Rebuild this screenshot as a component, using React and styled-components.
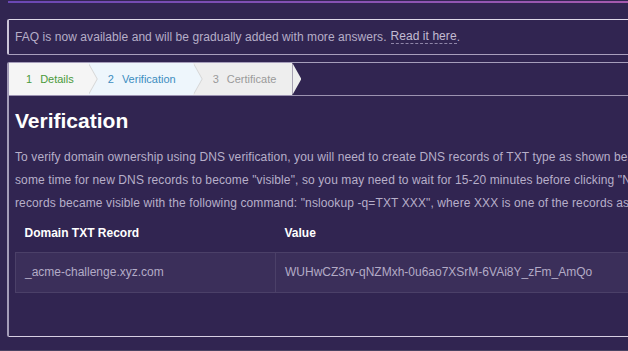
import React from "react";
import styled, { createGlobalStyle } from "styled-components";

const Global = createGlobalStyle`
  html, body { margin: 0; padding: 0; }
  body {
    background: #312551;
    font-family: "Liberation Sans", Arial, sans-serif;
    overflow: hidden;
    width: 628px;
    height: 351px;
  }
`;

const Page = styled.div`
  width: 1200px;
  padding: 1px 0 0 7px;
  height: 350px;
  position: relative;
`;

const TopLine = styled.div`
  height: 2px;
  margin-left: 1px;
  background: linear-gradient(90deg, #6a47b4 0%, #9456b2 40%, #b25cab 60%, #b65ea8 100%);
`;

const Notice = styled.div`
  margin-top: 16px;
  height: 34px;
  display: flex;
  align-items: center;
  padding: 0 6px;
  border: 1px solid #a99fbd;
  border-top-color: #ded8e8;
  border-left: 2px solid #cbc4d8;
  border-radius: 2px;
  font-size: 12px;
  letter-spacing: 0.06px;
  color: #b6aec8;
`;

const NoticeLink = styled.a`
  color: #c3bcd3;
  text-decoration: none;
  border-bottom: 1px dashed #8f85a8;
  margin-left: 4px;
  line-height: 13px;
`;

const Card = styled.div`
  margin-top: 7px;
  border: 1px solid #a69ebb;
  border-left: 2px solid #a49cb8;
  border-bottom-color: #d6cfe2;
  border-right: none;
  border-radius: 2px 0 0 2px;
  padding-bottom: 43px;
`;

const TabBar = styled.div`
  display: flex;
  height: 32px;
  border-bottom: 1px solid #9c93b1;
`;

const Tab = styled.div`
  position: relative;
  z-index: ${(p) => p.$z};
  display: flex;
  align-items: center;
  padding: 0 ${(p) => p.$pr}px 0 ${(p) => p.$pl}px;
  background: ${(p) => p.$bg};
  color: ${(p) => p.$fg};
  font-size: 11px;

  &::before {
    content: "";
    position: absolute;
    top: 0;
    left: calc(100% + 1px);
    width: 9px;
    height: 100%;
    background: ${(p) => (p.$last ? "transparent" : "#d6d6d6")};
    clip-path: polygon(0 0, 100% 50%, 0 100%);
  }
  &::after {
    content: "";
    position: absolute;
    top: 0;
    left: 100%;
    width: 9px;
    height: 100%;
    background: ${(p) => p.$bg};
    clip-path: polygon(0 0, 100% 50%, 0 100%);
  }
`;

const TabNum = styled.span`
  margin-right: 8px;
`;

const Body = styled.div`
  padding: 0 6px;
`;

const Heading = styled.h2`
  margin: 13px 0 13px;
  font-size: 21px;
  line-height: 24px;
  font-weight: bold;
  color: #ffffff;
`;

const Para = styled.p`
  margin: 0;
  font-size: 12px;
  line-height: 23px;
  letter-spacing: 0.11px;
  color: #b7afc9;
  white-space: nowrap;
`;

const Table = styled.table`
  border-collapse: collapse;
  width: 1100px;
  font-size: 12px;
`;

const Th = styled.th`
  text-align: left;
  font-weight: bold;
  color: #ffffff;
  height: 37px;
  padding: 0 9px;
  vertical-align: middle;
  width: ${(p) => (p.$w ? `${p.$w}px` : "auto")};
  box-sizing: border-box;
`;

const Td = styled.td`
  background: #3b2f5a;
  border: 1px solid #4b4068;
  color: #b3abc6;
  height: 39px;
  padding: 0 9px;
  vertical-align: middle;
`;

const BottomStrip = styled.div`
  position: absolute;
  left: 0;
  right: 0;
  bottom: -1px;
  height: 2px;
  background: #4a4262;
`;

export default function App() {
  return (
    <>
      <Global />
      <Page>
        <TopLine />
        <Notice>
          FAQ is now available and will be gradually added with more answers.
          <NoticeLink href="#">Read it here</NoticeLink>.
        </Notice>
        <Card>
          <TabBar>
            <Tab $z={3} $bg="#f5f5f5" $fg="#4a9a3c" $pl={17} $pr={14}>
              <TabNum>1</TabNum>Details
            </Tab>
            <Tab $z={2} $bg="#eef6fc" $fg="#3c8dbf" $pl={20} $pr={17}>
              <TabNum>2</TabNum>Verification
            </Tab>
            <Tab $z={1} $bg="#eeeeee" $fg="#9a9a9a" $pl={20} $pr={16} $last>
              <TabNum>3</TabNum>Certificate
            </Tab>
          </TabBar>
          <Body>
            <Heading>Verification</Heading>
            <Para>
              To verify domain ownership using DNS verification, you will need to create DNS records of TXT type as shown below. It may take
              <br />
              some time for new DNS records to become "visible", so you may need to wait for 15-20 minutes before clicking "Next". You can check if
              <br />
              records became visible with the following command: "nslookup -q=TXT XXX", where XXX is one of the records as shown in the table.
            </Para>
            <Table>
              <thead>
                <tr>
                  <Th $w={260}>Domain TXT Record</Th>
                  <Th>Value</Th>
                </tr>
              </thead>
              <tbody>
                <tr>
                  <Td>_acme-challenge.xyz.com</Td>
                  <Td>WUHwCZ3rv-qNZMxh-0u6ao7XSrM-6VAi8Y_zFm_AmQo</Td>
                </tr>
              </tbody>
            </Table>
          </Body>
        </Card>
        <BottomStrip />
      </Page>
    </>
  );
}
